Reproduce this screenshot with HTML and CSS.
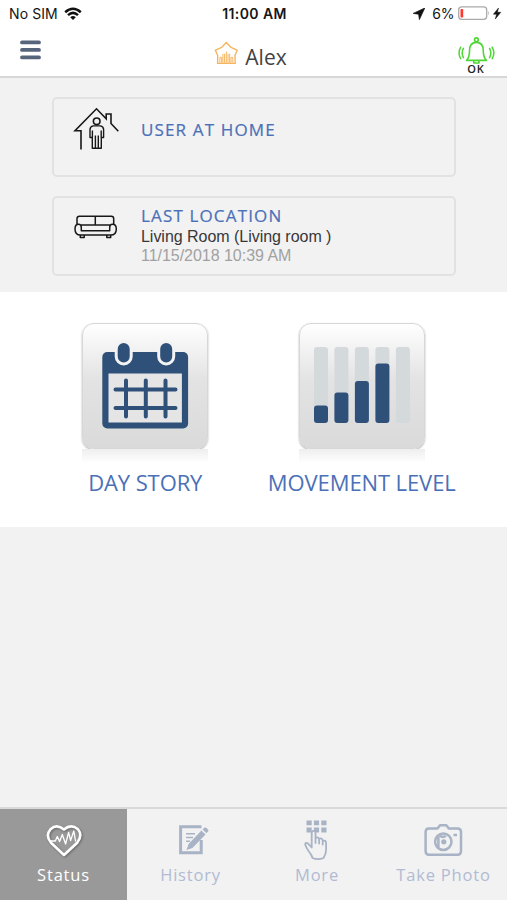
FILE: index.html
```html
<!DOCTYPE html>
<html lang="en">
<head>
<meta charset="utf-8">
<title>Status</title>
<link rel="stylesheet" href="styles.css">
</head>
<body>
<div class="app">
  <div class="statusbar">
    <div class="carrier"><span class="sim">No SIM</span>
      <svg width="18" height="14" viewBox="64 6 18 14" fill="none" stroke="#111" stroke-width="2.5"><path d="M65.2 11.2Q73 4.4 80.8 11.2M68 14.1Q73 9.6 78 14.1"/><path d="M70.2 16.2Q73 13.8 75.8 16.2L73 19Z" fill="#111" stroke="none"/></svg>
    </div>
    <div class="clock">11:00 AM</div>
    <div class="power">
      <svg width="12" height="12" viewBox="413 8 12 12"><path d="M424.8 8L413.2 13.4L418.6 14.2L419.4 19.6Z" fill="#111" stroke="#111" stroke-width=".7" stroke-linejoin="round"/></svg>
      <span class="percent">6%</span>
      <svg width="45" height="16" viewBox="457 6 45 16"><rect x="458.7" y="6.9" width="28" height="12.4" rx="3" fill="none" stroke="#aaa" stroke-width="1.3"/><rect x="460.5" y="9" width="2.7" height="8.6" rx=".8" fill="#fb3b30"/><path d="M488.2 11Q490 13.2 488.2 15.4Z" fill="#aaa"/><path d="M498.5 8L493.4 14.2H496.6L495.3 19L500.8 12.3H497.4Z" fill="#111" stroke="#111" stroke-width=".5"/></svg>
    </div>
  </div>
  <header class="header">
    <svg class="menu" width="22" height="20" viewBox="0 0 22 20" stroke="#56647c" stroke-width="3.8" stroke-linecap="round"><path d="M3 2.4H20M3 9.9H20M3 17.4H20"/></svg>
    <div class="person">
      <svg width="24" height="24" viewBox="215 41 24 24" fill="none" stroke="#f6b55d" stroke-width="1.4" stroke-linejoin="round"><path d="M227.3 42.4L231.9 47.3L238.2 50.2L236 55.6L236.2 63.4H218.6L218.7 55.6L216.4 50.2L222.7 47.3Z"/><path stroke-width="1" d="M220.9 62.8V57.4H222.7V62.8M223.9 62.8V53.8M225.6 62.8V53.8M227.3 62.8V51.6M229 62.8V53.8M230.7 62.8V53.8M232 62.8V57.4H233.8V62.8"/></svg>
      <span>Alex</span>
    </div>
    <div class="alarm">
      <svg width="38" height="28" viewBox="457 36 38 28" fill="none" stroke="#4ed634" stroke-width="1.6" stroke-linecap="round" stroke-linejoin="round"><circle cx="476.4" cy="39.8" r="1.9"/><path d="M466.6 60.4Q469.5 57.2 469.5 51Q469.5 42.4 476.4 42.4Q483.3 42.4 483.3 51Q483.3 57.2 486.4 60.4ZM473.8 60.7V63H479V60.7"/><path d="M463.4 48.4Q460.9 53 463.4 57.6M460.7 47.2Q457.4 53 460.7 58.6M489.6 48.4Q492.1 53 489.6 57.6M492.2 47.2Q495.5 53 492.2 58.6" stroke-width="1.5"/></svg>
      <span>OK</span>
    </div>
  </header>
  <main>
    <section class="cards">
      <article class="card">
        <svg width="88" height="75" viewBox="54 99.5 88 75" fill="none" stroke="#181818" stroke-width="1.6"><path d="M81 150V131.2H75L96.5 109.3L106.2 119.2V114.5H111V124L118.3 131.8"/><circle cx="96.7" cy="121.8" r="3.3"/><path stroke-width="1.4" stroke-linejoin="round" d="M93.2 126.4H100.3Q103.6 127 103.6 130V138H101.3V148.8H92.3V138H90V130Q90 127 93.2 126.4ZM92.4 131V138M101.2 131V138M95.4 136V148M98.3 136V148"/></svg>
        <div class="copy home"><h2>USER AT HOME</h2></div>
      </article>
      <article class="card">
        <svg width="88" height="75" viewBox="54.5 198.5 88 75" fill="none" stroke="#181818" stroke-width="1.5" stroke-linejoin="round"><path d="M77.5 225V219Q77.5 216.7 80 216.7H111.8Q114.2 216.7 114.2 219V225M95.8 217V225.2M81 225.6H111M81 235.6Q75.5 235.6 75.5 229.4Q75.5 224.8 79 224.8Q81.8 224.8 81.8 228V231.2H110.2V228Q110.2 224.8 113 224.8Q116.8 224.8 116.8 229.4Q116.8 235.6 111.2 235.6ZM80.8 235.6V238H84.7V235.6M107.3 235.6V238H111.2V235.6"/></svg>
        <div class="copy"><h2>LAST LOCATION</h2><p class="room">Living Room (Living room )</p><p class="time">11/15/2018 10:39 AM</p></div>
      </article>
    </section>
    <section class="tiles">
      <div class="tile">
        <div class="button"><svg width="124" height="124" viewBox="83.5 324 124 124"><rect x="102.8" y="352" width="85.8" height="76.5" rx="5" fill="#2f5079"/><path fill="#e5e5e6" d="M109 373.5H182.4V422.4H109Z"/><path d="M126.5 380.5V416.5M146.3 380.5V416.5M166 380.5V416.5M116 389.5H176M116 408H176" stroke="#2f5079" stroke-width="4" stroke-linecap="round"/><g fill="#2f5079" stroke="#f3f3f3" stroke-width="3"><rect x="116.7" y="341.4" width="15" height="22.5" rx="7.5"/><rect x="159.2" y="341.4" width="15" height="22.5" rx="7.5"/></g></svg></div>
        <div class="reflection"></div><div class="label">DAY STORY</div>
      </div>
      <div class="tile">
        <div class="button"><svg width="124" height="124" viewBox="300 324 124 124"><g fill="#d4d9dc"><rect x="314" y="347" width="14" height="76" rx="3"/><rect x="334.4" y="347" width="14" height="76" rx="3"/><rect x="354.9" y="347" width="14" height="76" rx="3"/><rect x="375.4" y="347" width="14" height="76" rx="3"/><rect x="395.9" y="347" width="14" height="76" rx="3"/></g><g fill="#2f5079"><rect x="314" y="405.4" width="14" height="17.7" rx="3"/><rect x="334.4" y="392.5" width="14" height="30.6" rx="3"/><rect x="354.9" y="381" width="14" height="42" rx="3"/><rect x="375.4" y="363.4" width="14" height="59.7" rx="3"/></g></svg></div>
        <div class="reflection"></div><div class="label">MOVEMENT LEVEL</div>
      </div>
    </section>
  </main>
  <nav class="tabs">
    <div class="tab active"><svg width="46" height="42" viewBox="40 819 46 42" fill="none" stroke="#fff" stroke-linejoin="round"><path class="heart" stroke-width="2.6" d="M63 855L50 842.7Q44 835.5 49.5 829.3Q56 823.5 63 829.6Q70 823.5 77 829.3Q82 835.5 76.2 842.7Z"/><path stroke-width="1.3" d="M48.5 841H54.3L56.3 836.5L58.6 841.5L61.3 834.5L64.6 844L67.6 832.5L69.6 840.5L72.8 831L74.6 841.5"/></svg><span>Status</span></div>
    <div class="tab"><svg width="46" height="42" viewBox="168 819 46 42" fill="none" stroke="#a8b3c5"><path stroke-width="3" d="M201.5 826.7H180.6V852.8H201.2V840"/><path stroke-width="1.4" d="M186 833.8H195M186 837.5H193M186 841.2H190"/><path fill="#a8b3c5" stroke="none" d="M186.5 850L188.6 844L201.4 830.5L205.5 834.4L192.4 848ZM202.6 829.4L204.3 827.8Q205.4 827 206.6 828L208 829.5Q209 830.6 208 831.6L206.4 833.3Z"/></svg><span>History</span></div>
    <div class="tab"><svg width="46" height="42" viewBox="294.5 819 46 42"><path fill="#a8b3c5" d="M307 820.5H312.2V825.3H307ZM314.4 820.5H319.6V825.3H314.4ZM321.8 820.5H327V825.3H321.8ZM307 827.5H312.2V832.5H307ZM314.4 827.5H319.6V832.5H314.4ZM321.8 827.5H327V832.5H321.8Z"/><path d="M313 858Q312.2 855 309.4 851.5Q306.8 848 305.7 844.5Q305.8 841.7 308.6 843.6L312.2 847.5V833Q312.2 830.8 314.1 830.8Q316 830.8 316 833V843V838.6Q318 836 319.6 838.8V843.5V839.3Q321.6 837.2 323.2 840V844.5V841.2Q326.6 839.5 326.6 843.2V850Q326.5 854 324 858Q318.5 860.3 313 858Z" fill="#f2f2f2" stroke="#a8b3c5" stroke-width="1.8" stroke-linejoin="round"/></svg><span>More</span></div>
    <div class="tab"><svg width="46" height="42" viewBox="421 819 46 42" fill="none" stroke="#a8b3c5"><path stroke-width="2.5" stroke-linejoin="round" d="M429 828.5H437.5L440 825.3H446.3L448.8 828.5H457.5Q461 828.5 461 832V851Q461 854.8 457.5 854.8H429Q425.6 854.8 425.6 851V832Q425.6 828.5 429 828.5Z"/><circle cx="443.3" cy="841.7" r="8.2" stroke-width="2.5"/><path stroke-width="2.5" d="M438.4 836.5V847M453.5 835H457M440 835.5Q442 838 446 836"/><circle cx="443.8" cy="841.8" r="2.6" fill="#a8b3c5" stroke="none"/></svg><span>Take Photo</span></div>
  </nav>
</div>
</body>
</html>
```
FILE: styles.css
```css
* { box-sizing: border-box; }
body { margin: 0; }
h2, p { margin: 0; }
svg { display: block; flex: none; }
.app { width: 507px; height: 900px; display: flex; flex-direction: column; background: #f2f2f2; overflow: hidden; font-family: "Open Sans", sans-serif; }
.statusbar { height: 27px; background: #fff; display: grid; grid-template-columns: 1fr auto 1fr; align-items: center; padding: 0 5px 0 9px; color: #151515; font: 14px/27px Inter, sans-serif; }
.carrier { display: flex; align-items: center; gap: 6px; }
.sim { letter-spacing: .1px; }
.clock { font-weight: 600; letter-spacing: .4px; margin-left: -2px; }
.power { display: flex; align-items: center; justify-content: flex-end; }
.percent { margin: 0 3px 0 7px; letter-spacing: -.4px; }
.header { height: 51px; background: #fff; border-bottom: 2px solid #d7d7d7; display: grid; grid-template-columns: 1fr auto 1fr; padding: 0 12px 0 19px; }
.menu { margin-top: 13px; }
.person { display: flex; gap: 7px; margin-left: -13px; padding-top: 14px; color: #424242; font-size: 21px; line-height: 32px; }
.alarm { justify-self: end; padding-top: 9px; text-align: center; color: #222; font-size: 11px; line-height: 10px; font-weight: 600; letter-spacing: .8px; }
.alarm svg { height: 28px; }
.alarm span { display: block; }
.cards { height: 214px; padding: 19px 51px 0 52px; display: flex; flex-direction: column; gap: 19px; }
.card { height: 80px; border: 2px solid #e2e2e2; border-radius: 5px; display: flex; }
.copy { padding-top: 7px; margin-left: -1px; white-space: nowrap; }
.copy.home { padding-top: 20px; }
h2 { font-size: 17px; line-height: 22px; font-weight: 400; letter-spacing: 1.15px; color: #4b70b8; -webkit-text-stroke: .2px #4b70b8; }
.room, .time { font: 16px/20px "Liberation Sans", sans-serif; color: #383838; letter-spacing: -.03px; }
.time { line-height: 18px; color: #a1a1a1; }
.tiles { height: 235px; background: #fff; padding: 31px 37px 0; display: grid; grid-template-columns: 1fr 1fr; }
.tile { display: flex; flex-direction: column; align-items: center; }
.button { width: 126px; height: 126px; border: 1px solid #d7d7d7; border-radius: 12px; background: linear-gradient(#fff, #e3e3e4 45%, #dadadb); box-shadow: 0 1px 2px #aaa; }
.reflection { width: 126px; height: 14px; background: linear-gradient(#eee, #fff); }
.label { margin-top: 3px; height: 32px; font-size: 22px; line-height: 32px; color: #4b70b8; letter-spacing: -.1px; white-space: nowrap; }
.tabs { margin-top: auto; height: 93px; border-top: 2px solid #d9d9d9; display: grid; grid-template-columns: 127px 127px 126px 127px; }
.tab { display: flex; flex-direction: column; align-items: center; padding-top: 10px; color: #b1bbd3; font-size: 16.5px; line-height: 24px; letter-spacing: .8px; white-space: nowrap; }
.tab span { margin-top: 2px; }
.active { color: #fff; background: #999; }
.heart { filter: drop-shadow(1px 1px 1px #666); }
```
